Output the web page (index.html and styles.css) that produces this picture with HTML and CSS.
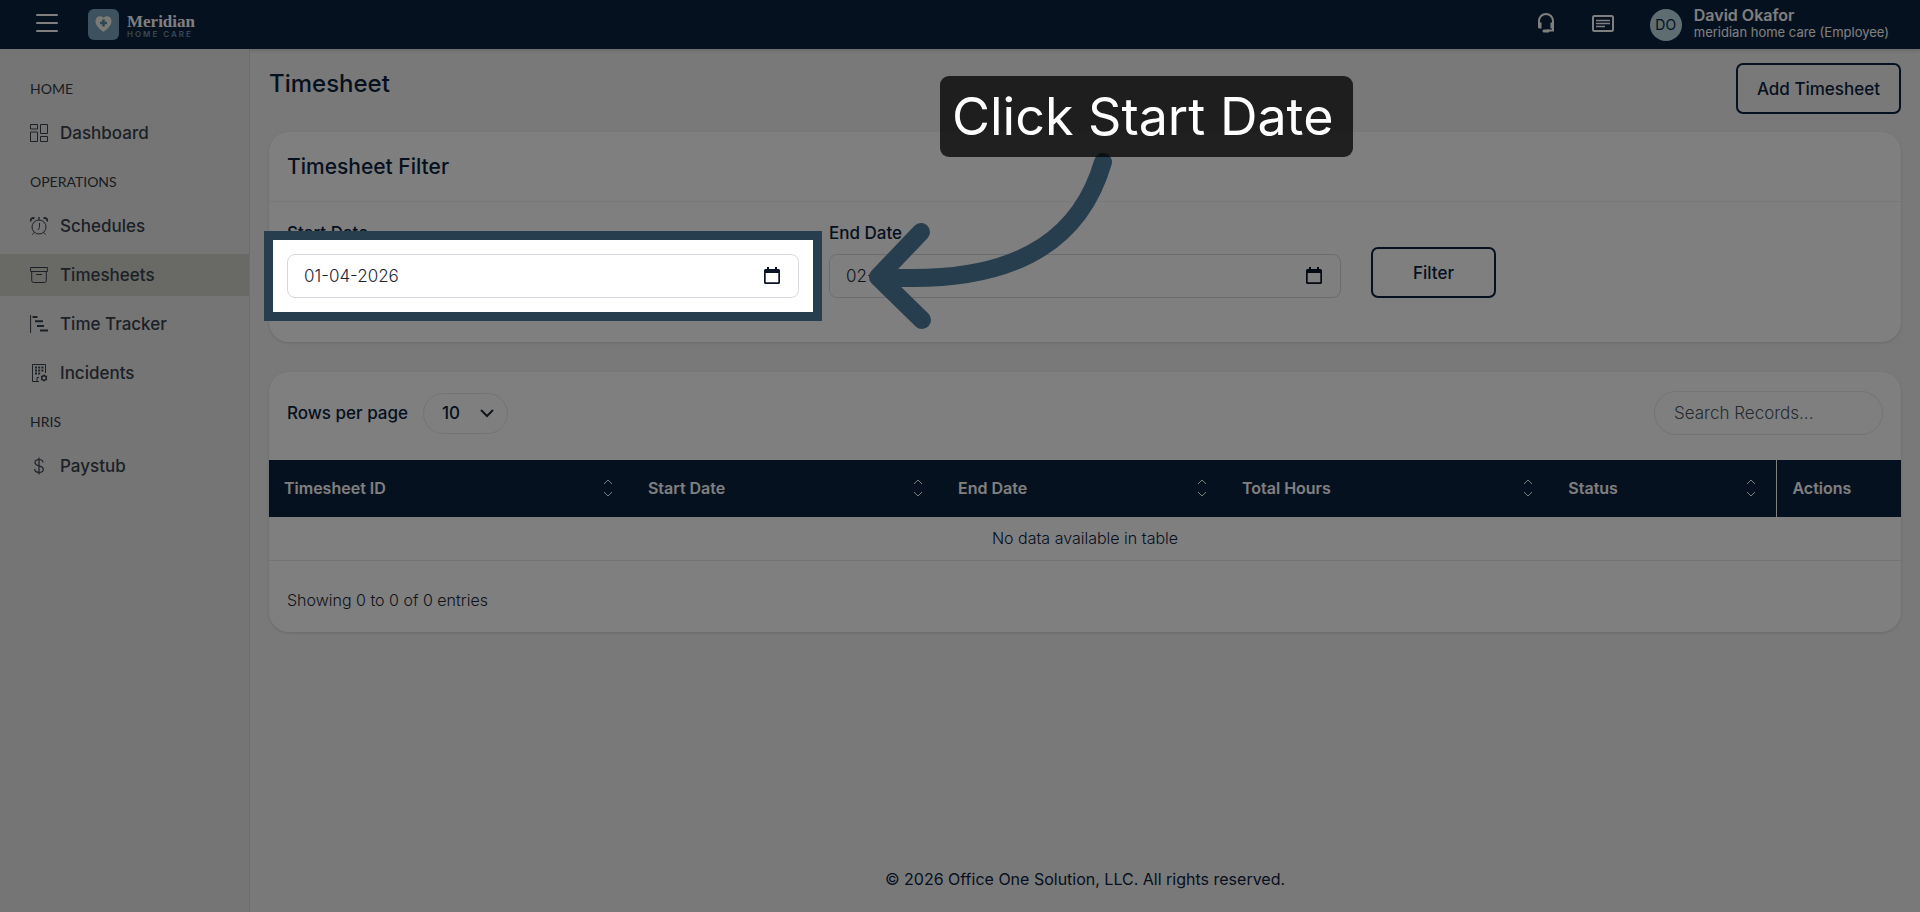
FILE: index.html
```html
<!DOCTYPE html>
<html lang="en">
<head>
<meta charset="utf-8">
<meta name="viewport" content="width=device-width, initial-scale=1">
<title>Timesheet</title>
<link rel="stylesheet" href="styles.css">
</head>
<body>
<div class="page">
  <header class="topbar">
    <button class="icon-btn menu-btn" type="button" aria-label="Toggle menu">
      <svg width="24" height="20" viewBox="0 0 24 20" fill="none" stroke="currentColor" stroke-width="2" stroke-linecap="round"><path d="M2 2h20M2 10h20M2 18h20"/></svg>
    </button>
    <a class="brand" href="#">
      <svg class="brand-mark" width="31" height="31" viewBox="0 0 31 31"><rect width="31" height="31" rx="6" fill="#7aa3bd"/><path d="M15.5 23C10.500 19 7.500 16 7.500 12.200C7.500 9 9.500 7.200 12 7.200c1.500 0 2.700.6 3.500 1.500c.8-.9 2-1.500 3.500-1.500c2.500 0 4.500 1.800 4.500 5C23.500 16 20.500 19 15.500 23z" fill="#f4f4ef"/><path d="M15.500 10.500v7M12 14h7" stroke="#5e8aa6" stroke-width="2.600"/></svg>
      <span class="brand-text"><span class="brand-name">Meridian</span><span class="brand-sub">HOME CARE</span></span>
    </a>
    <div class="topbar-right">
      <button class="icon-btn" type="button" aria-label="Support">
        <svg width="20" height="22" viewBox="0 0 20 22" fill="none" stroke="currentColor" stroke-width="2"><path d="M3 12V9a7 7 0 0 1 14 0v9.500h-6"/><path d="M2 10.500h3.500v6H3.500A1.500 1.500 0 0 1 2 15zM18 10.500h-3.500v6H18z" fill="currentColor" stroke="none"/><path d="M8 19h4" stroke-width="3" stroke-linecap="round"/></svg>
      </button>
      <button class="icon-btn" type="button" aria-label="News">
        <svg width="22" height="18" viewBox="0 0 22 18" fill="none" stroke="currentColor" stroke-width="2"><rect x="1" y="2" width="20" height="15" rx="1.500"/><path d="M4 6.500h14M4 9.500h14M4 12.500h9" stroke-width="1.600"/></svg>
      </button>
      <a class="user" href="#">
        <span class="avatar">DO</span>
        <span class="user-text"><span class="user-name">David Okafor</span><span class="user-org">meridian home care (Employee)</span></span>
      </a>
    </div>
  </header>

  <div class="shell">
    <nav class="sidebar" aria-label="Main">
      <h2 class="nav-title">HOME</h2>
      <ul class="nav-list">
        <li><a class="nav-link" href="#"><svg class="nav-icon" viewBox="0 0 18 18"><path d="M.5.5h7v4.500h-7zM.5 8h7v9.500h-7zM10.500.5h7v9h-7zM10.500 12.500h7v5h-7z"/></svg>Dashboard</a></li>
      </ul>
      <h2 class="nav-title">OPERATIONS</h2>
      <ul class="nav-list">
        <li><a class="nav-link" href="#"><svg class="nav-icon" viewBox="0 0 18 18"><circle cx="9" cy="10" r="7"/><path d="M9.500 6v4.500L8 13M8 .8h2M9 .8V3M4 15.500l-1.500 2M14 15.500l1.500 2"/><path d="M.8 4.500A2.500 2.500 0 0 1 4.500 1.500M17.200 4.500A2.500 2.500 0 0 0 13.500 1.500" stroke-width="1.800"/></svg>Schedules</a></li>
        <li><a class="nav-link active" href="#" aria-current="page"><svg class="nav-icon" viewBox="0 0 18 18"><path d="M.6 1.500h16.800v4H.6zM1.700 5.500v9a2 2 0 0 0 2 2h10.600a2 2 0 0 0 2-2v-9M6 8.500h6"/></svg>Timesheets</a></li>
        <li><a class="nav-link" href="#"><svg class="nav-icon" viewBox="0 0 18 18"><path d="M.6 0v18"/><path d="M2.500 2h5M5 6.300h8M7 11h7M10 15.500h8" stroke-width="2"/></svg>Time Tracker</a></li>
        <li><a class="nav-link" href="#"><svg class="nav-icon" viewBox="0 0 18 18"><path d="M9 17.500H2.500V.5h13V9M7 17v-3.500h2"/><path d="M5 3.500h2M8.200 3.500h2M11.400 3.500h2M5 6.500h2M8.200 6.500h2M11.400 6.500h2M5 9.500h2M8.200 9.500h2" stroke-width="1.800"/><circle cx="14" cy="14" r="2.300" stroke-width="1.500"/><path d="M14 10.300v1.400M14 16.300v1.400M10.800 12.200l1.200.6M16 15.200l1.200.6M10.800 15.800l1.200-.6M16 12.800l1.200-.6"/></svg>Incidents</a></li>
      </ul>
      <h2 class="nav-title">HRIS</h2>
      <ul class="nav-list">
        <li><a class="nav-link" href="#"><svg class="nav-icon" viewBox="0 0 18 18"><path d="M13 5.500C13 3.600 11.400 2.500 9 2.500S5 3.700 5 5.500c0 2 1.600 2.700 4 3.300s4.300 1.300 4.300 3.400c0 2-1.700 3.200-4.300 3.200s-4.300-1.300-4.300-3.300M9 .5v17" stroke-width="1.200"/></svg>Paystub</a></li>
      </ul>
    </nav>

    <main class="main">
      <div class="page-head">
        <h1 class="page-title">Timesheet</h1>
        <button class="btn" type="button">Add Timesheet</button>
      </div>

      <section class="card">
        <h2 class="card-title">Timesheet Filter</h2>
        <form class="filter-form">
          <div class="field">
            <label for="start-date">Start Date</label>
            <div class="date-box">
              <input id="start-date" type="text" value="01-04-2026">
              <svg class="cal" width="16" height="18" viewBox="0 0 16 18"><path d="M3 0h2v2h6V0h2v2h1.500A1.500 1.500 0 0 1 16 3.500v12a1.500 1.500 0 0 1-1.500 1.500h-13A1.500 1.500 0 0 1 0 15.500v-12A1.500 1.500 0 0 1 1.500 2H3zM1.700 6v9.300h12.600V6z"/></svg>
              <div class="spotlight"></div>
              <svg class="pointer" width="250" height="190" viewBox="0 0 250 190" fill="none" stroke="#273e4e" stroke-width="18" stroke-linecap="round" stroke-linejoin="round"><path d="M235 22C217 84 167 147 14 137M53 92L10 137L54 180"/></svg>
              <div class="callout" role="tooltip">Click Start Date</div>
            </div>
          </div>
          <div class="field">
            <label for="end-date">End Date</label>
            <div class="date-box">
              <input id="end-date" type="text" value="02-04-2026">
              <svg class="cal" width="16" height="18" viewBox="0 0 16 18"><path d="M3 0h2v2h6V0h2v2h1.500A1.500 1.500 0 0 1 16 3.500v12a1.500 1.500 0 0 1-1.500 1.500h-13A1.500 1.500 0 0 1 0 15.500v-12A1.500 1.500 0 0 1 1.500 2H3zM1.700 6v9.300h12.600V6z"/></svg>
            </div>
          </div>
          <div class="filter-action"><button class="btn btn-filter" type="button">Filter</button></div>
        </form>
      </section>

      <section class="card">
        <div class="table-tools">
          <label for="rows">Rows per page</label>
          <select id="rows" class="rows-select"><option>10</option><option>25</option><option>50</option></select>
          <input class="search" type="search" placeholder="Search Records..." aria-label="Search records">
        </div>
        <table class="records">
          <colgroup><col class="c-id"><col class="c-start"><col class="c-end"><col class="c-hours"><col class="c-status"><col class="c-actions"></colgroup>
          <thead>
            <tr>
              <th scope="col"><span class="th-in">Timesheet ID<svg class="sort" viewBox="0 0 10 18"><path d="M1 5l4-4 4 4M1 13l4 4 4-4"/></svg></span></th>
              <th scope="col"><span class="th-in">Start Date<svg class="sort" viewBox="0 0 10 18"><path d="M1 5l4-4 4 4M1 13l4 4 4-4"/></svg></span></th>
              <th scope="col"><span class="th-in">End Date<svg class="sort" viewBox="0 0 10 18"><path d="M1 5l4-4 4 4M1 13l4 4 4-4"/></svg></span></th>
              <th scope="col"><span class="th-in">Total Hours<svg class="sort" viewBox="0 0 10 18"><path d="M1 5l4-4 4 4M1 13l4 4 4-4"/></svg></span></th>
              <th scope="col"><span class="th-in">Status<svg class="sort" viewBox="0 0 10 18"><path d="M1 5l4-4 4 4M1 13l4 4 4-4"/></svg></span></th>
              <th scope="col" class="actions">Actions</th>
            </tr>
          </thead>
          <tbody><tr><td colspan="6">No data available in table</td></tr></tbody>
        </table>
        <p class="table-info">Showing 0 to 0 of 0 entries</p>
      </section>

      <footer class="footer">© 2026 Office One Solution, LLC. All rights reserved.</footer>
    </main>
  </div>
</div>
</body>
</html>
```
FILE: styles.css
```css
* { box-sizing: border-box; }

body {
  margin: 0;
  background: #f3f3f3;
  color: #0c2240;
  font-family: Inter, "Liberation Sans", sans-serif;
  font-size: 16px;
  line-height: 20px;
}

h1, h2, p, ul { margin: 0; padding: 0; }
a { color: inherit; text-decoration: none; }
button, input, select { font: inherit; color: inherit; }

.page { min-height: 100vh; display: flex; flex-direction: column; overflow-x: clip; }

/* Top bar */
.topbar {
  display: flex;
  align-items: center;
  height: 49px;
  padding: 0 31px 0 35px;
  background: #0c2240;
  color: #fff;
  box-shadow: 0 2px 4px rgba(0, 0, 0, .12);
}
.icon-btn { display: flex; padding: 0 0 4px; border: 0; background: none; color: #fff; }
.brand { display: flex; align-items: center; gap: 8px; margin-left: 29px; }
.brand-text { display: flex; flex-direction: column; padding-top: 4px; }
.brand-name { font: bold 17px/15px "Liberation Serif", serif; }
.brand-sub { font-size: 8px; line-height: 10px; letter-spacing: 2px; color: #6f93aa; font-weight: 600; }
.topbar-right { display: flex; align-items: center; gap: 36px; margin-left: auto; }
.user { display: flex; align-items: center; gap: 12px; }
.avatar {
  width: 32px;
  height: 32px;
  border-radius: 50%;
  background: #bcdbe3;
  color: #0c2240;
  font-size: 14px;
  line-height: 32px;
  text-align: center;
}
.user-text { display: flex; flex-direction: column; line-height: 17px; padding-bottom: 1px; }
.user-name { font-weight: 600; }
.user-org { font-size: 13px; }

/* Sidebar */
.shell { flex: 1; display: flex; }
.sidebar {
  flex: 0 0 250px;
  padding-top: 12px;
  background: #ebebeb;
  border-right: 1px solid #d8d8d8;
}
.nav-title {
  padding: 18px 30px 13px;
  font-size: 14px;
  line-height: 20px;
  font-weight: 400;
  font-family: Lato, sans-serif;
  color: #333b44;
}
.nav-list { list-style: none; display: flex; flex-direction: column; gap: 7px; }
.nav-link {
  display: flex;
  align-items: center;
  gap: 12px;
  height: 42px;
  padding: 0 30px;
  font-size: 17px;
  font-weight: 500;
  color: #39424d;
}
.nav-link.active { background: #d3d3cd; }
.nav-icon { width: 18px; height: 18px; fill: none; stroke: currentColor; stroke-width: 1; }

/* Main column */
.main { flex: 1; min-width: 0; display: flex; flex-direction: column; padding: 14px 19px 23px; }
.page-head { display: flex; justify-content: space-between; align-items: flex-start; margin-bottom: 18px; }
.page-title { padding-top: 6px; font-size: 24px; line-height: 30px; font-weight: 500; }
.btn {
  height: 51px;
  padding: 0 19px;
  border: 2px solid #0c2240;
  border-radius: 7px;
  background: none;
  font-size: 17px;
  font-weight: 500;
  color: #0c2240;
}
.card {
  margin-bottom: 30px;
  background: #fff;
  border-radius: 20px;
  box-shadow: 0 1px 3px rgba(0, 0, 0, .14);
}
.card-title {
  padding: 18px;
  border-bottom: 1px solid #f0f0f0;
  font-size: 21px;
  line-height: 33px;
  font-weight: 500;
}

/* Filter form */
.filter-form {
  display: grid;
  grid-template-columns: repeat(3, 1fr);
  gap: 30px;
  padding: 21px 18px 44px;
}
.field label { display: block; margin-bottom: 11px; font-size: 17px; font-weight: 500; }
.date-box { position: relative; display: flex; }
.date-box input {
  width: 100%;
  height: 44px;
  padding: 0 16px;
  border: 1px solid #d5d8dc;
  border-radius: 8px;
  background: #fff;
  font-size: 17px;
  font-weight: 300;
  color: #1c2733;
}
.cal { position: absolute; right: 19px; top: 13px; fill: #0b1424; }
.filter-action { display: flex; align-items: flex-end; }
.btn-filter { width: 125px; }

/* Guided-step layer: dims everything outside the highlighted control */
.spotlight {
  position: absolute;
  inset: -23px;
  z-index: 10;
  border: 9px solid #273e4e;
  box-shadow: 0 0 0 3000px rgba(0, 0, 0, .5);
  pointer-events: none;
}
.pointer { position: absolute; z-index: 11; left: calc(100% + 69px); top: -114px; pointer-events: none; }
.callout {
  position: absolute;
  z-index: 12;
  left: calc(100% + 141px);
  top: -178px;
  padding: 0 20px 0 12px;
  border-radius: 9px;
  background: rgba(0, 0, 0, .75);
  color: #fff;
  font-size: 52px;
  line-height: 81px;
  white-space: nowrap;
}

/* Records */
.table-tools { display: flex; align-items: center; padding: 19px 18px 25px; font-weight: 500; }
.table-tools label { font-size: 17px; }
.rows-select {
  width: 85px;
  height: 41px;
  margin-left: 15px;
  padding: 0 18px;
  border: 1px solid #e8e8e8;
  border-radius: 21px;
  appearance: none;
  background: #fff url("data:image/svg+xml,%3Csvg xmlns='http://www.w3.org/2000/svg' width='14' height='9' fill='none' stroke='%23222c38' stroke-width='2'%3E%3Cpath d='M1 1l6 6 6-6'/%3E%3C/svg%3E") no-repeat right 13px center;
  font-size: 17px;
  font-weight: 500;
}
.search {
  width: 229px;
  height: 44px;
  margin-left: auto;
  padding: 0 19px;
  border: 1px solid #e8e8e8;
  border-radius: 22px;
  background: #fff;
  font-size: 17px;
  font-weight: 300;
}
.search::placeholder { color: #4c5661; opacity: 1; }
.records { width: 100%; table-layout: fixed; border-collapse: collapse; }
.c-id { width: 22.3%; }
.c-start { width: 19%; }
.c-end { width: 17.4%; }
.c-hours { width: 20%; }
.c-status { width: 13.7%; }
.c-actions { width: 7.6%; }
.records th {
  height: 57px;
  padding: 0 20px 1px 15px;
  background: #0c2240;
  color: #fff;
  font-weight: 600;
  text-align: left;
}
.records .actions { border-left: 1px solid #fff; }
.th-in { display: flex; align-items: center; justify-content: space-between; }
.sort { width: 10px; height: 18px; fill: none; stroke: #fff; stroke-width: 1; }
.records td {
  height: 43px;
  padding: 0;
  border-bottom: 1px solid #e6e6e6;
  font-weight: 300;
  text-align: center;
}
.table-info { padding: 29px 18px 22px; font-weight: 300; color: #1c2733; }
.footer { margin-top: auto; text-align: center; }
```
